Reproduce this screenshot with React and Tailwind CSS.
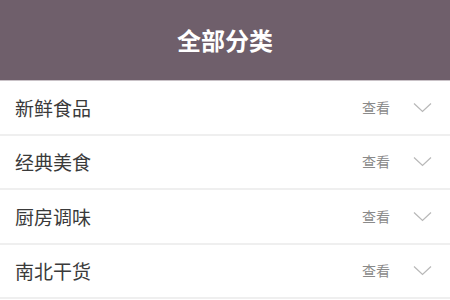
import React from 'react';

const categories = ['新鲜食品', '经典美食', '厨房调味', '南北干货'];

const Chevron = () => (
  <svg width="19" height="11" viewBox="0 0 19 11" fill="none" className="text-[#b8b8b8]">
    <path d="M1 1.5 L9.5 9.5 L18 1.5" stroke="currentColor" strokeWidth="1.2" />
  </svg>
);

const App = () => {
  return (
    <div
      className="w-[450px] h-[300px] overflow-hidden bg-white"
      style={{ fontFamily: '"Noto Sans CJK SC", "Noto Sans", sans-serif' }}
    >
      <div className="h-[81px] bg-[#6f5f6b] flex items-center justify-center border-b border-[#c9c2c7]">
        <h1 className="text-[24px] font-bold text-white">全部分类</h1>
      </div>
      {categories.map((name) => (
        <div
          key={name}
          className="h-[54.5px] flex items-center justify-between pl-[15px] pr-[18px] border-b-2 border-[#efefef]"
        >
          <span className="text-[19px] text-[#3a3a3a] pt-[1px]">{name}</span>
          <div className="flex items-center gap-[23px]">
            <span className="text-[14px] text-[#8a8a8a]">查看</span>
            <Chevron />
          </div>
        </div>
      ))}
    </div>
  );
};

export default App;
